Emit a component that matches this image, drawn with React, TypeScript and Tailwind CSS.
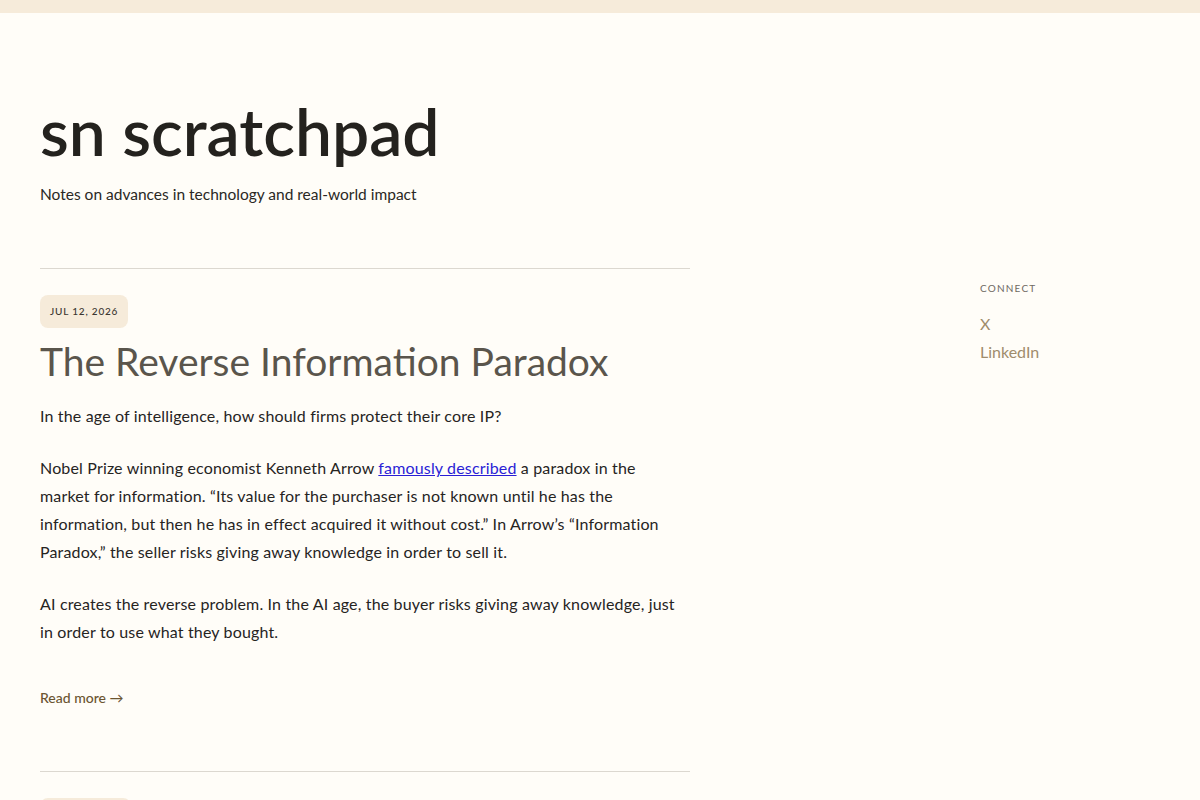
import React from "react";

export default function App() {
  return (
    <div className="min-h-screen bg-[#fffdf8] text-[#222] overflow-hidden" style={{ fontFamily: "Lato, 'Open Sans', sans-serif" }}>
      <div className="h-[13px] bg-[#f6ebda]" />
      <div className="flex px-10">
        <main className="w-[650px]">
          <header className="pt-[78px] pb-[62px]">
            <h1 className="text-[66px] font-semibold leading-[80px] text-[#24221e]">sn scratchpad</h1>
            <p className="mt-[12px] text-[15.5px] text-[#2a2824]">Notes on advances in technology and real-world impact</p>
          </header>
          <article className="border-t border-[#dcd8d0] pt-[26px] pb-[62px]">
            <span className="inline-block rounded-lg bg-[#f6ebda] px-[10px] py-[9px] text-[10px] font-medium tracking-[0.08em] text-[#3a3630] leading-[15px]">JUL 12, 2026</span>
            <h2 className="mt-[9px] text-[39px] leading-[48px] text-[#5a554c]">The Reverse Information Paradox</h2>
            <div className="mt-[17px] max-w-[640px] text-[16px] leading-[28px] tracking-[0.01em] text-[#26241f] space-y-[24px]">
              <p>In the age of intelligence, how should firms protect their core IP?</p>
              <p>
                Nobel Prize winning economist Kenneth Arrow{" "}
                <a href="#" className="text-[#2a1ed6] underline">famously described</a> a paradox in the market for information. “Its value for the purchaser is not known until he has the information, but then he has in effect acquired it without cost.” In Arrow’s “Information Paradox,” the seller risks giving away knowledge in order to sell it.
              </p>
              <p>AI creates the reverse problem. In the AI age, the buyer risks giving away knowledge, just in order to use what they bought.</p>
            </div>
            <a href="#" className="mt-[41px] inline-block text-[14px] font-medium text-[#6b5531]">Read more →</a>
          </article>
          <article className="border-t border-[#dcd8d0] pt-[26px]">
            <span className="inline-block rounded-lg bg-[#f6ebda] px-[10px] py-[9px] text-[10px] font-medium tracking-[0.08em] text-[#3a3630] leading-[15px]">JUN 28, 2026</span>
          </article>
        </main>
        <aside className="ml-[290px] pt-[268px]">
          <div className="text-[10px] tracking-[0.12em] text-[#6f6a62]">CONNECT</div>
          <ul className="mt-[17px] space-y-[6px] text-[16px] leading-[22px] text-[#a08c6c]">
            <li><a href="#">X</a></li>
            <li><a href="#">LinkedIn</a></li>
          </ul>
        </aside>
      </div>
    </div>
  );
}
